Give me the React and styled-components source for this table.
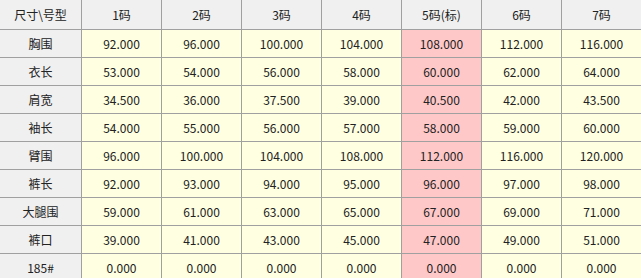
import React from "react";
import styled, { createGlobalStyle } from "styled-components";

const Global = createGlobalStyle`
  html, body { margin: 0; padding: 0; background: #ffffff; overflow: hidden; }
  body { font-family: "Noto Sans CJK SC", "Noto Sans", sans-serif; }
`;

const Grid = styled.div`
  display: grid;
  grid-template-columns: 81px repeat(7, 79px);
  grid-auto-rows: 27px;
  grid-template-rows: 29px;
  gap: 1px;
  background: #a0a0a0;
  width: 641px;
  height: 278px;
  overflow: hidden;
  align-content: start;
`;

const Cell = styled.div`
  display: flex;
  align-items: center;
  justify-content: center;
  font-size: 12px;
  color: #222;
  background: ${(p) => (p.$head ? "#f0f0f0" : p.$std ? "#ffc8c8" : "#ffffe1")};
  white-space: nowrap;
`;

const headers = ["尺寸\\号型", "1码", "2码", "3码", "4码", "5码(标)", "6码", "7码"];
const rows = [
  ["胸围", 92, 96, 100, 104, 108, 112, 116],
  ["衣长", 53, 54, 56, 58, 60, 62, 64],
  ["肩宽", 34.5, 36, 37.5, 39, 40.5, 42, 43.5],
  ["袖长", 54, 55, 56, 57, 58, 59, 60],
  ["臂围", 96, 100, 104, 108, 112, 116, 120],
  ["裤长", 92, 93, 94, 95, 96, 97, 98],
  ["大腿围", 59, 61, 63, 65, 67, 69, 71],
  ["裤口", 39, 41, 43, 45, 47, 49, 51],
  ["185#", 0, 0, 0, 0, 0, 0, 0],
];

export default function App() {
  return (
    <>
      <Global />
      <Grid>
        {headers.map((h) => (
          <Cell key={h} $head>{h}</Cell>
        ))}
        {rows.map((r) =>
          r.map((v, i) =>
            i === 0 ? (
              <Cell key={r[0] + i} $head>{v}</Cell>
            ) : (
              <Cell key={r[0] + i} $std={i === 5}>{v.toFixed(3)}</Cell>
            )
          )
        )}
      </Grid>
    </>
  );
}
